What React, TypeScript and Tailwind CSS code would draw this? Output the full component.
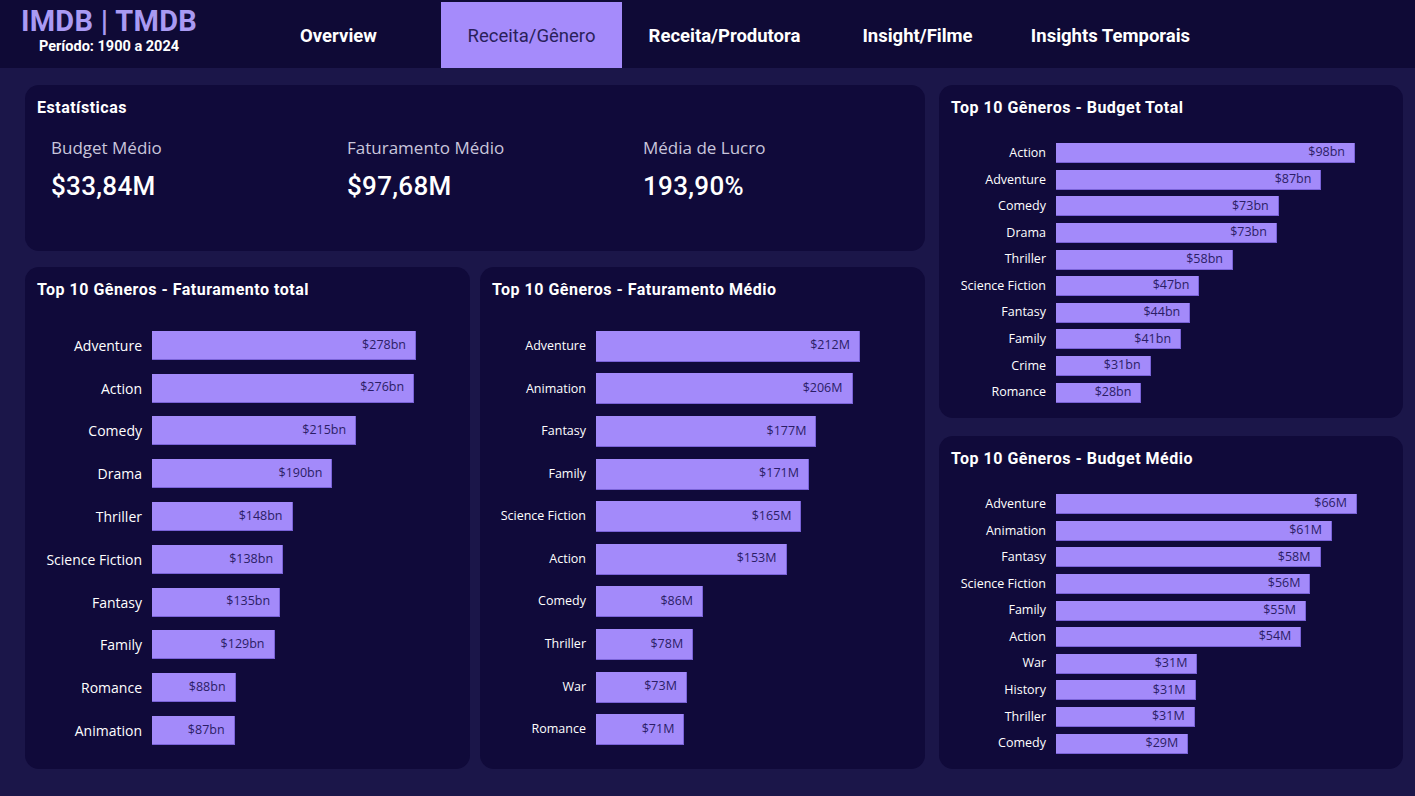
import React from "react";

type Row = { label: string; value: number; text: string };

const fatTotal: Row[] = [
  { label: "Adventure", value: 278, text: "$278bn" },
  { label: "Action", value: 276, text: "$276bn" },
  { label: "Comedy", value: 215, text: "$215bn" },
  { label: "Drama", value: 190, text: "$190bn" },
  { label: "Thriller", value: 148, text: "$148bn" },
  { label: "Science Fiction", value: 138, text: "$138bn" },
  { label: "Fantasy", value: 135, text: "$135bn" },
  { label: "Family", value: 129, text: "$129bn" },
  { label: "Romance", value: 88, text: "$88bn" },
  { label: "Animation", value: 87, text: "$87bn" },
];

const fatMedio: Row[] = [
  { label: "Adventure", value: 212, text: "$212M" },
  { label: "Animation", value: 206, text: "$206M" },
  { label: "Fantasy", value: 177, text: "$177M" },
  { label: "Family", value: 171, text: "$171M" },
  { label: "Science Fiction", value: 165, text: "$165M" },
  { label: "Action", value: 153, text: "$153M" },
  { label: "Comedy", value: 86, text: "$86M" },
  { label: "Thriller", value: 78, text: "$78M" },
  { label: "War", value: 73, text: "$73M" },
  { label: "Romance", value: 71, text: "$71M" },
];

const budTotal: Row[] = [
  { label: "Action", value: 98, text: "$98bn" },
  { label: "Adventure", value: 87, text: "$87bn" },
  { label: "Comedy", value: 73, text: "$73bn" },
  { label: "Drama", value: 72.4, text: "$73bn" },
  { label: "Thriller", value: 58, text: "$58bn" },
  { label: "Science Fiction", value: 47, text: "$47bn" },
  { label: "Fantasy", value: 44, text: "$44bn" },
  { label: "Family", value: 41, text: "$41bn" },
  { label: "Crime", value: 31, text: "$31bn" },
  { label: "Romance", value: 28, text: "$28bn" },
];

const budMedio: Row[] = [
  { label: "Adventure", value: 66, text: "$66M" },
  { label: "Animation", value: 60.5, text: "$61M" },
  { label: "Fantasy", value: 58, text: "$58M" },
  { label: "Science Fiction", value: 55.8, text: "$56M" },
  { label: "Family", value: 54.8, text: "$55M" },
  { label: "Action", value: 53.8, text: "$54M" },
  { label: "War", value: 31, text: "$31M" },
  { label: "History", value: 30.6, text: "$31M" },
  { label: "Thriller", value: 30.4, text: "$31M" },
  { label: "Comedy", value: 29, text: "$29M" },
];

const din = { fontFamily: "Roboto, 'Noto Sans', sans-serif" };
const segoe = { fontFamily: "'Open Sans', 'Noto Sans', sans-serif" };

function BarChart({
  title,
  rows,
  max,
  maxW,
  labelW,
  rowH,
  barH,
  labelSize,
  listMt,
  valueSize,
}: {
  title: string;
  rows: Row[];
  max: number;
  maxW: number;
  labelW: string;
  rowH: string;
  barH: string;
  labelSize: string;
  listMt: string;
  valueSize: string;
}) {
  return (
    <div className="flex-1 rounded-[14px] bg-[#100a3a] pt-[13px]">
      <div
        className="pl-[12px] text-[16px] leading-[20px] font-bold text-white tracking-[0.5px]"
        style={din}
      >
        {title}
      </div>
      <div className={`flex flex-col ${listMt}`}>
        {rows.map((r) => (
          <div key={r.label} className={`flex items-center ${rowH}`}>
            <div
              className={`${labelW} shrink-0 pr-[10px] text-right text-white ${labelSize} whitespace-nowrap`}
              style={segoe}
            >
              {r.label}
            </div>
            <div
              className={`${barH} bg-[#a38afa] border-r border-b border-[#7a63d8] flex items-center justify-end pr-[9px] text-[#2b1d66] ${valueSize} whitespace-nowrap`}
              style={{ width: `${(r.value / max) * maxW}px`, ...segoe }}
            >
              {r.text}
            </div>
          </div>
        ))}
      </div>
    </div>
  );
}

function Stat({ label, value }: { label: string; value: string }) {
  return (
    <div className="w-[296px] shrink-0">
      <div className="text-[17px] leading-[22px] text-[#c9c6dc]" style={segoe}>
        {label}
      </div>
      <div
        className="mt-[12px] text-[26px] leading-[30px] font-medium text-white tracking-[0.3px]"
        style={din}
      >
        {value}
      </div>
    </div>
  );
}

export default function App() {
  const tabs = [
    "Overview",
    "Receita/Gênero",
    "Receita/Produtora",
    "Insight/Filme",
    "Insights Temporais",
  ];
  return (
    <div className="w-[1415px] h-[796px] bg-[#1b1649] overflow-hidden">
      <header className="h-[68px] bg-[#0f0a36] flex">
        <div className="w-[218px] flex flex-col items-center pt-[5px]" style={din}>
          <div className="text-[29px] leading-[33px] font-bold text-[#a99af3] tracking-[0.3px]">
            IMDB | TMDB
          </div>
          <div className="text-[14.5px] leading-[17px] font-bold text-white">
            Período: 1900 a 2024
          </div>
        </div>
        <nav className="ml-[30px] flex gap-[12px] pt-[2px]">
          {tabs.map((t) => {
            const active = t === "Receita/Gênero";
            return (
              <div
                key={t}
                className={`w-[181px] h-[66px] pt-[3px] flex items-center justify-center text-[18.5px] ${
                  active
                    ? "bg-[#a58bfb] text-[#2a1f5a] font-normal"
                    : "text-white font-bold"
                }`}
                style={din}
              >
                {t}
              </div>
            );
          })}
        </nav>
      </header>

      <main className="flex gap-[14px] pl-[25px] pr-[12px] pt-[17px]">
        <div className="w-[900px] flex flex-col gap-[16px]">
          <div className="h-[166px] rounded-[14px] bg-[#100a3a] pt-[13px]">
            <div
              className="pl-[12px] text-[16px] leading-[20px] font-bold text-white tracking-[0.5px]"
              style={din}
            >
              Estatísticas
            </div>
            <div className="flex pl-[26px] mt-[19px]">
              <Stat label="Budget Médio" value="$33,84M" />
              <Stat label="Faturamento Médio" value="$97,68M" />
              <Stat label="Média de Lucro" value="193,90%" />
            </div>
          </div>
          <div className="h-[502px] flex gap-[10px]">
            <BarChart
              title="Top 10 Gêneros - Faturamento total"
              rows={fatTotal}
              max={278}
              maxW={264}
              labelW="w-[127px]"
              rowH="h-[42.8px]"
              barH="h-[29px]"
              labelSize="text-[14px]"
              listMt="mt-[24px]"
              valueSize="text-[12.5px]"
            />
            <BarChart
              title="Top 10 Gêneros - Faturamento Médio"
              rows={fatMedio}
              max={212}
              maxW={264}
              labelW="w-[116px]"
              rowH="h-[42.6px]"
              barH="h-[31px]"
              labelSize="text-[12.5px]"
              listMt="mt-[25px]"
              valueSize="text-[12.5px]"
            />
          </div>
        </div>
        <div className="w-[464px] flex flex-col gap-[18px]">
          <div className="h-[333px] flex">
            <BarChart
              title="Top 10 Gêneros - Budget Total"
              rows={budTotal}
              max={98}
              maxW={299}
              labelW="w-[117px]"
              rowH="h-[26.6px]"
              barH="h-[20px]"
              labelSize="text-[12.5px]"
              listMt="mt-[22px]"
              valueSize="text-[12.5px]"
            />
          </div>
          <div className="h-[333px] flex">
            <BarChart
              title="Top 10 Gêneros - Budget Médio"
              rows={budMedio}
              max={66}
              maxW={301}
              labelW="w-[117px]"
              rowH="h-[26.6px]"
              barH="h-[20px]"
              labelSize="text-[12.5px]"
              listMt="mt-[22px]"
              valueSize="text-[12.5px]"
            />
          </div>
        </div>
      </main>
    </div>
  );
}
